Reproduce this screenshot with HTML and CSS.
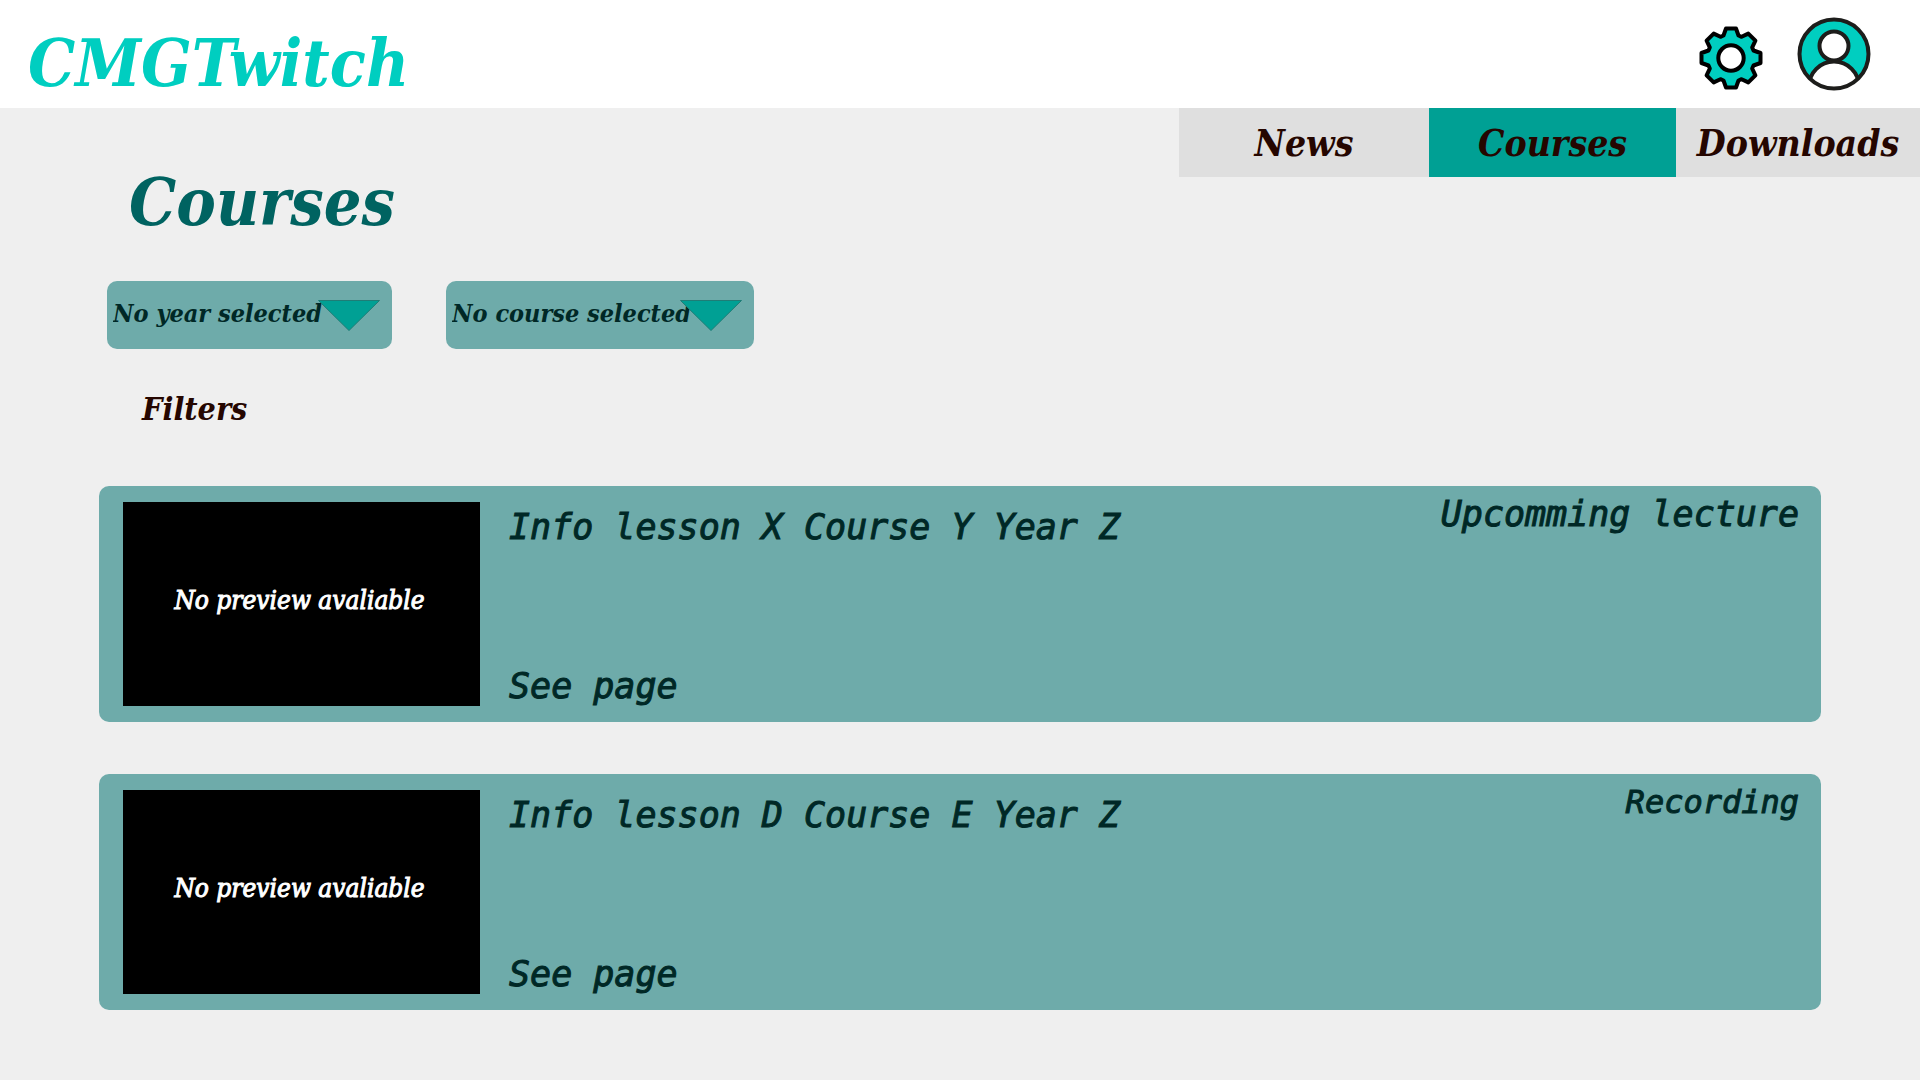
FILE: index.html
```html
<!DOCTYPE html>
<html lang="en">
<head>
<meta charset="utf-8">
<meta name="viewport" content="width=device-width, initial-scale=1">
<title>CMGTwitch - Courses</title>
<link rel="stylesheet" href="styles.css">
</head>
<body>
<header class="site-header">
  <a class="logo" href="#">CMGTwitch</a>
  <div class="header-actions">
    <button class="icon-button" type="button" aria-label="Settings">
      <svg class="gear" viewBox="-32 -32 64 64" aria-hidden="true">
        <path d="M-7.5-22.5-5-29.5H5L7.5-22.5 10.6-21.2 17.3-24.4 24.4-17.3 21.2-10.6 22.5-7.5 29.5-5V5L22.5 7.5 21.2 10.6 24.4 17.3 17.3 24.4 10.6 21.2 7.5 22.5 5 29.5H-5L-7.5 22.5-10.6 21.2-17.3 24.4-24.4 17.3-21.2 10.6-22.5 7.5-29.5 5V-5L-22.5-7.5-21.2-10.6-24.4-17.3-17.3-24.4-10.6-21.2Z" fill="#00cec0" stroke="#000" stroke-width="4" stroke-linejoin="round"/>
        <circle r="12.7" fill="#fff" stroke="#000" stroke-width="4"/>
      </svg>
    </button>
    <button class="icon-button" type="button" aria-label="Account">
      <svg class="avatar" viewBox="-37 -37 74 74" aria-hidden="true">
        <clipPath id="disc"><circle r="35"/></clipPath>
        <circle r="34.5" fill="#00cec0"/>
        <g clip-path="url(#disc)" fill="#fff" stroke="#1d1d1b" stroke-width="4">
          <circle cy="32.5" r="25"/>
          <circle cy="-8" r="14.5"/>
        </g>
        <circle r="34.5" fill="none" stroke="#1d1d1b" stroke-width="4"/>
      </svg>
    </button>
  </div>
</header>
<main>
  <div class="top-row">
    <h1>Courses</h1>
    <nav class="tabs" aria-label="Main">
      <a class="tab" href="#">News</a>
      <a class="tab active" href="#" aria-current="page">Courses</a>
      <a class="tab" href="#">Downloads</a>
    </nav>
  </div>
  <form class="filters">
    <div class="picker year">
      <select aria-label="Year"><option>No year selected</option></select>
      <svg class="arrow" viewBox="0 0 62 31" aria-hidden="true"><path d="M.5.5h61L31 30.5z" fill="#00a094" stroke="#1f7d76"/></svg>
    </div>
    <div class="picker course">
      <select aria-label="Course"><option>No course selected</option></select>
      <svg class="arrow" viewBox="0 0 62 31" aria-hidden="true"><path d="M.5.5h61L31 30.5z" fill="#00a094" stroke="#1f7d76"/></svg>
    </div>
  </form>
  <h2>Filters</h2>
  <div class="lessons">
    <article class="lesson">
      <div class="preview">No preview avaliable</div>
      <div class="info">
        <h3>Info lesson X Course Y Year Z</h3>
        <a href="#">See page</a>
      </div>
      <p class="status">Upcomming lecture</p>
    </article>
    <article class="lesson">
      <div class="preview">No preview avaliable</div>
      <div class="info">
        <h3>Info lesson D Course E Year Z</h3>
        <a href="#">See page</a>
      </div>
      <p class="status small">Recording</p>
    </article>
  </div>
</main>
</body>
</html>
```
FILE: styles.css
```css
* { box-sizing: border-box; }
body {
  margin: 0;
  background: #efefef;
  color: #250600;
  font-family: "DejaVu Serif Condensed", "DejaVu Serif", serif;
  font-style: italic;
}
a { color: inherit; text-decoration: none; }
h1, h2, h3, p { margin: 0; }

.site-header {
  display: flex;
  justify-content: space-between;
  align-items: center;
  height: 108px;
  padding: 0 49px 0 28px;
  background: #fff;
}
.logo {
  padding-top: 18px;
  color: #00cec0;
  font-size: 66px;
  line-height: 76px;
  font-weight: bold;
}
.header-actions { display: flex; align-items: center; gap: 34px; }
.icon-button { padding: 0; border: 0; background: none; cursor: pointer; }
.icon-button svg { display: block; }
.gear { width: 64px; height: 64px; margin-top: 8px; }
.avatar { width: 74px; height: 74px; }

.top-row { display: flex; justify-content: space-between; height: 173px; }
h1 {
  padding: 56px 0 0 129px;
  color: #006361;
  font-size: 66px;
  line-height: 76px;
}
.tabs { display: grid; grid-template-columns: 250px 247px 244px; height: 69px; }
.tab {
  display: flex;
  align-items: center;
  justify-content: center;
  background: #dfdfdf;
  font-size: 37px;
  font-weight: bold;
}
.active { background: #00a094; }

.filters { display: flex; gap: 54px; padding-left: 107px; }
.picker { position: relative; height: 68px; }
.year { width: 285px; }
.course { width: 308px; }
.picker select {
  appearance: none;
  width: 100%;
  height: 100%;
  padding: 0 6px 4px;
  border: 0;
  border-radius: 10px;
  background: #6eabaa;
  color: #002826;
  font: italic bold 25px "DejaVu Serif Condensed", "DejaVu Serif", serif;
}
.arrow {
  position: absolute;
  top: 19px;
  right: 12px;
  width: 62px;
  height: 31px;
  pointer-events: none;
}
h2 { padding: 40px 0 0 142px; font-size: 32px; line-height: 40px; }

.lessons { display: grid; gap: 52px; padding: 57px 99px 70px; }
.lesson {
  display: flex;
  min-height: 236px;
  padding: 16px 22px 16px 24px;
  border-radius: 10px;
  background: #6eabaa;
  color: #002826;
  font-family: "DejaVu Sans Mono", monospace;
  font-size: 35px;
  line-height: 40px;
  -webkit-text-stroke: 1px;
}
.preview {
  display: flex;
  align-items: center;
  justify-content: center;
  width: 357px;
  padding: 0 4px 8px 0;
  background: #000;
  color: #fff;
  font-family: "DejaVu Serif Condensed", "DejaVu Serif", serif;
  font-size: 26px;
}
.info {
  display: flex;
  flex: 1;
  flex-direction: column;
  justify-content: space-between;
  align-items: flex-start;
  padding: 5px 0 0 29px;
}
h3 { font-size: 35px; font-weight: normal; }
.status { margin-top: -8px; }
.small { font-size: 32px; }
```
